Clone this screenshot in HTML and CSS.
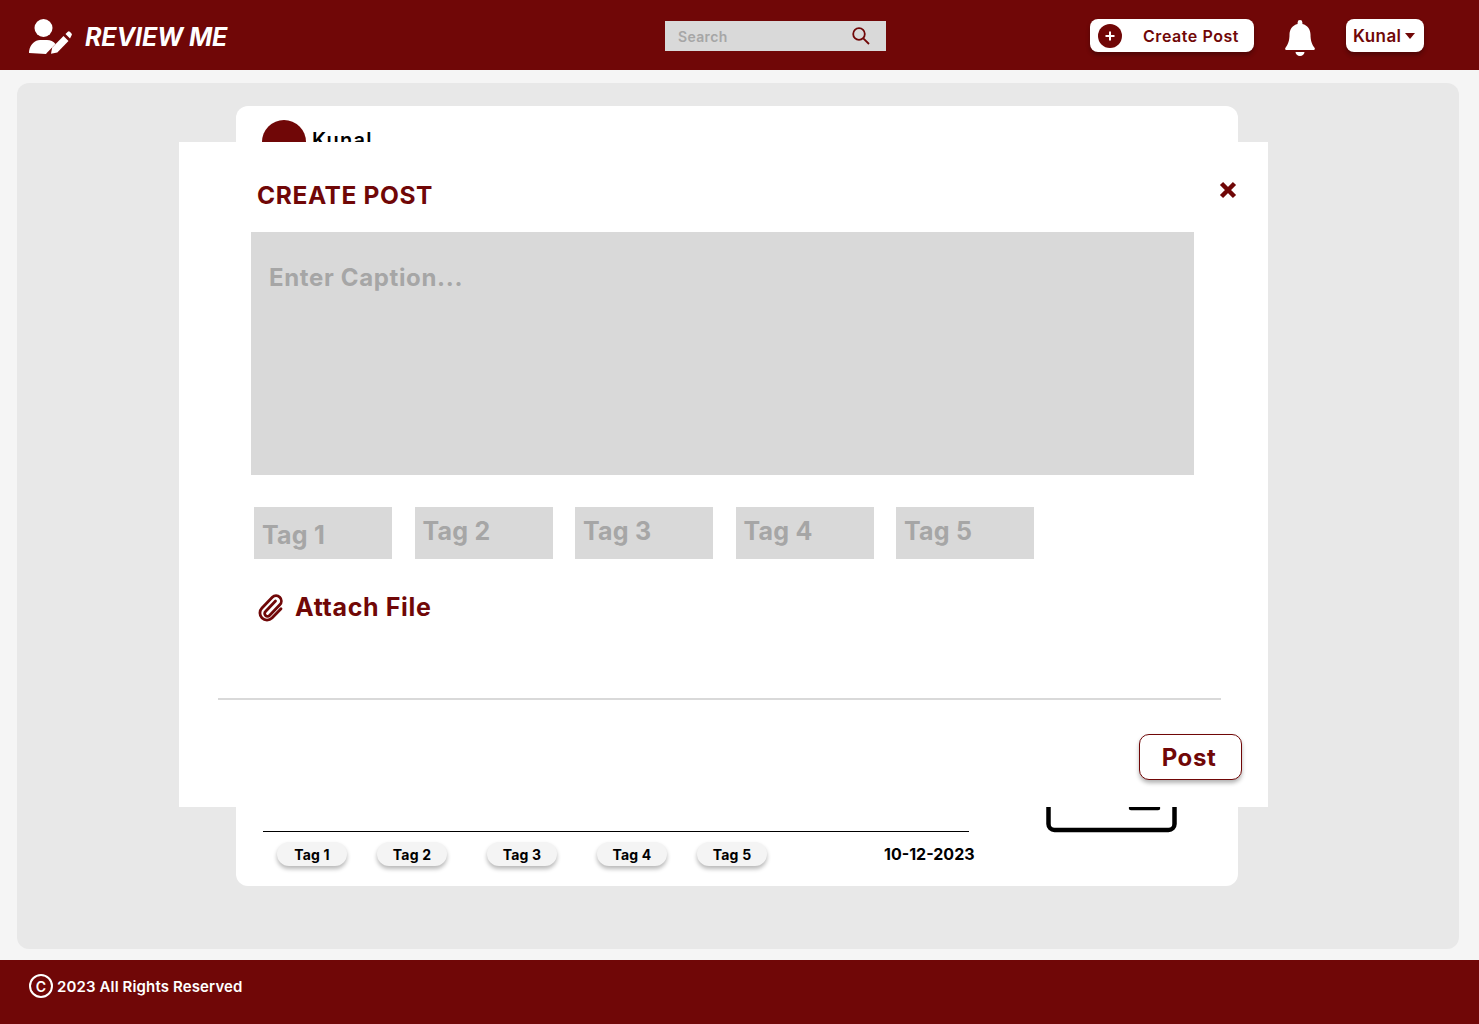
FILE: index.html
```html
<!DOCTYPE html>
<html lang="en">
<head>
<meta charset="utf-8">
<title>Review Me</title>
<link rel="stylesheet" href="styles.css">
</head>
<body>
<header class="topbar">
  <div class="brand">
    <svg class="brand-icon" viewBox="0 0 44 36" width="44" height="36"><circle cx="14.500" cy="9" r="9"/><path d="M0 34c0-.8 0-1.500.2-2.500C1.300 25.500 6 21 11 21h7c3.500 0 6.500 1.500 8.500 4l-9 9.200-.4 .8z"/><path d="M22 34.800l1.200-6.300L34.500 17l5 5L28.300 33.500z"/><path d="M36.500 15l2.300-2.300a1.500 1.500 0 0 1 2 0l1.700 1.700a1.500 1.500 0 0 1 0 2L41 19.500z"/></svg>
    <span class="brand-name">REVIEW ME</span>
  </div>
  <div class="search">
    <span class="search-text">Search</span>
    <svg viewBox="0 0 20 20" width="20" height="20" class="search-icon"><circle cx="8" cy="8" r="5.800"/><path d="M12.300 12.300L18 18"/></svg>
  </div>
  <div class="actions">
    <button class="create-btn">
      <span class="plus-circle"><svg viewBox="0 0 12 12" width="12" height="12"><path d="M6 1.500v9M1.500 6h9"/></svg></span>
      <span>Create Post</span>
    </button>
    <svg class="bell" viewBox="0 0 30 36" width="30" height="36"><path d="M15 0a2.400 2.400 0 0 0-2.400 2.400v1.500C7.500 5 4.500 9.300 4.500 14.500c0 6.500-1.500 10-4 13.200-.8 1-.2 2.300 1.200 2.300h26.600c1.400 0 2-1.300 1.200-2.300-2.500-3.200-4-6.700-4-13.200 0-5.200-3-9.500-8.100-10.600V2.400A2.400 2.400 0 0 0 15 0z"/><path d="M10.500 32h9c0 2.200-2 4-4.500 4s-4.500-1.800-4.500-4z"/></svg>
    <button class="user-btn"><span>Kunal</span><i class="caret"></i></button>
  </div>
</header>

<main class="page">
  <section class="panel">
    <article class="card">
      <div class="author">
        <span class="avatar"></span>
        <span class="author-name">Kunal</span>
      </div>
      <div class="card-body">
        <div class="card-rule"></div>
        <svg class="card-media" viewBox="0 0 131 30" width="131" height="30"><path d="M2.500 0v21a6 6 0 0 0 6 6h114a6 6 0 0 0 6-6V0"/><path d="M85 5h27"/></svg>
      </div>
      <div class="card-foot">
        <div class="chips">
          <span class="chip">Tag 1</span>
          <span class="chip">Tag 2</span>
          <span class="chip chip-wide">Tag 3</span>
          <span class="chip chip-wide">Tag 4</span>
          <span class="chip">Tag 5</span>
        </div>
        <span class="date">10-12-2023</span>
      </div>
    </article>

    <div class="modal">
      <div class="modal-head">
        <h2 class="modal-title">CREATE POST</h2>
        <svg class="close" viewBox="0 0 18 18" width="18" height="18"><path d="M2.500 2.500l13 13M15.500 2.500l-13 13"/></svg>
      </div>
      <div class="caption">Enter Caption...</div>
      <div class="tag-inputs">
        <div class="tag-input tag-low">Tag 1</div>
        <div class="tag-input">Tag 2</div>
        <div class="tag-input">Tag 3</div>
        <div class="tag-input">Tag 4</div>
        <div class="tag-input">Tag 5</div>
      </div>
      <div class="attach">
        <svg viewBox="0 0 26 30" width="26" height="30"><path d="M17.500 9L7.500 19.500a2.800 2.800 0 0 0 4 4L21.800 12.800a5.300 5.300 0 0 0-7.500-7.500L4 16a7 7 0 0 0 10 10l9-9.300"/></svg>
        <span>Attach File</span>
      </div>
      <hr class="divider">
      <div class="modal-foot"><button class="post-btn">Post</button></div>
    </div>
  </section>
</main>

<footer class="footer">
  <span class="copy-mark">C</span>
  <span class="copy-text">2023 All Rights Reserved</span>
</footer>
</body>
</html>
```

FILE: styles.css
```css
* { box-sizing: border-box; }
html, body { margin: 0; height: 100%; }
body {
  width: 1479px;
  height: 1024px;
  overflow: hidden;
  display: flex;
  flex-direction: column;
  background: #f5f5f5;
  font-family: "Inter", "Liberation Sans", sans-serif;
}
button { font-family: inherit; border: 0; cursor: pointer; }

.topbar {
  height: 70px;
  flex: none;
  display: flex;
  align-items: center;
  padding: 0 55px 0 29px;
  background: #700707;
}
.brand { width: 636px; display: flex; align-items: center; gap: 12px; padding-top: 4px; }
.brand-icon { fill: #fff; width: 44px; height: 36px; }
.brand-name { color: #fff; font-size: 25px; font-weight: 700; font-style: italic; letter-spacing: -.1px; }
.search {
  width: 221px;
  height: 30px;
  margin-top: 2px;
  display: flex;
  align-items: center;
  justify-content: space-between;
  padding: 0 15px 0 13px;
  background: #d9d9d9;
}
.search-text { color: #a6a6a6; font-size: 14px; font-weight: 600; letter-spacing: .35px; }
.search-icon { fill: none; stroke: #700707; stroke-width: 1.800; }
.actions { margin-left: auto; display: flex; align-items: center; gap: 31px; }
.create-btn {
  width: 164px;
  height: 33px;
  display: flex;
  align-items: center;
  gap: 21px;
  padding: 2px 0 0 8px;
  border-radius: 8px;
  background: #fff;
  color: #700707;
  font-size: 16px;
  font-weight: 600;
  letter-spacing: .55px;
  box-shadow: 0 3px 4px rgba(0,0,0,.3);
}
.plus-circle {
  width: 24px;
  height: 24px;
  border-radius: 50%;
  background: #700707;
  display: flex;
  align-items: center;
  justify-content: center;
}
.plus-circle svg { fill: none; stroke: #fff; stroke-width: 2; }
.bell { fill: #fff; margin-top: 5px; }
.user-btn {
  width: 78px;
  height: 33px;
  display: flex;
  align-items: center;
  gap: 4px;
  padding: 2px 0 0 7px;
  border-radius: 8px;
  background: #fff;
  color: #700707;
  font-size: 17px;
  font-weight: 600;
  letter-spacing: .4px;
  box-shadow: 0 3px 4px rgba(0,0,0,.3);
}
.caret {
  width: 0;
  height: 0;
  border-left: 5.500px solid transparent;
  border-right: 5.500px solid transparent;
  border-top: 6px solid #700707;
}

.page { height: 890px; flex: none; padding: 13px 20px 11px 17px; }
.panel {
  position: relative;
  height: 866px;
  padding: 23px 0 0 219px;
  border-radius: 12px;
  background: #e8e8e8;
}
.card {
  width: 1002px;
  height: 780px;
  display: flex;
  flex-direction: column;
  padding: 14px 0 0 26px;
  border-radius: 12px;
  background: #fff;
}
.author { display: flex; gap: 6px; }
.avatar { width: 44px; height: 44px; border-radius: 50%; background: #700707; }
.author-name { font-size: 20px; font-weight: 600; line-height: 40px; color: #000; letter-spacing: 1.200px; }
.card-body {
  margin-top: auto;
  display: flex;
  align-items: flex-end;
  justify-content: space-between;
  padding-right: 61px;
  padding-left: 1px;
}
.card-rule { width: 706px; height: 1px; background: #000; }
.card-media { fill: none; stroke: #000; stroke-width: 4.500; stroke-linecap: round; margin-bottom: -1px; }
.card-foot {
  height: 54px;
  display: flex;
  padding: 10px 0 0 15px;
}
.chips { display: flex; gap: 30px; }
.chip {
  width: 70px;
  height: 24px;
  display: flex;
  align-items: center;
  justify-content: center;
  border-radius: 12px;
  background: #f4f4f4;
  color: #000;
  font-size: 14px;
  font-weight: 700;
  letter-spacing: .2px;
  box-shadow: 0 3px 4px rgba(0,0,0,.28);
}
.chip-wide { margin-left: 10px; }
.date { margin: 0 0 0 117px; font-size: 16px; font-weight: 700; line-height: 24px; color: #000; }

.modal {
  position: absolute;
  left: 162px;
  top: 59px;
  width: 1089px;
  height: 665px;
  display: flex;
  flex-direction: column;
  padding: 0 26px 0 39px;
  background: #fff;
}
.modal-head {
  height: 90px;
  display: flex;
  align-items: flex-start;
  justify-content: space-between;
  padding: 36px 5px 0 39px;
}
.modal-title { margin: 0; font-size: 24.500px; line-height: 34px; font-weight: 700; color: #700707; letter-spacing: .6px; }
.close { fill: none; stroke: #700707; stroke-width: 4.500; margin-top: 3px; }
.caption {
  width: 943px;
  height: 243px;
  margin-left: 33px;
  padding: 29px 18px;
  background: #d9d9d9;
  color: #a6a6a6;
  font-size: 24px;
  line-height: 34px;
  font-weight: 700;
  letter-spacing: .65px;
}
.tag-inputs { display: flex; gap: 22.500px; margin: 32px 0 0 36px; }
.tag-input {
  width: 138px;
  height: 52px;
  padding: 8px 8px;
  background: #d9d9d9;
  color: #a6a6a6;
  font-size: 25px;
  line-height: 33px;
  font-weight: 700;
  letter-spacing: .2px;
}
.tag-low { padding-top: 12px; }
.attach {
  display: flex;
  align-items: center;
  gap: 11px;
  margin: 33px 0 0 40px;
  color: #700707;
  font-size: 25px;
  line-height: 30px;
  font-weight: 700;
  letter-spacing: .65px;
}
.attach svg { fill: none; stroke: #700707; stroke-width: 2.800; stroke-linecap: round; }
.divider { width: 1003px; height: 2px; margin: 76px 0 0 0; border: 0; background: #d9d9d9; }
.modal-foot { display: flex; justify-content: flex-end; margin-top: 34px; }
.post-btn {
  width: 103px;
  height: 46px;
  padding: 0 3px 0 0;
  border: 1px solid #700707;
  border-radius: 10px;
  background: #fff;
  color: #700707;
  font-size: 24px;
  font-weight: 700;
  letter-spacing: .6px;
  box-shadow: 0 3px 4px rgba(0,0,0,.3);
}

.footer {
  height: 64px;
  flex: none;
  display: flex;
  align-items: flex-start;
  gap: 4px;
  padding: 14px 0 0 29px;
  background: #700707;
  color: #fff;
}
.copy-mark {
  width: 24px;
  height: 24px;
  display: flex;
  align-items: center;
  justify-content: center;
  border: 2px solid #fff;
  border-radius: 50%;
  font-size: 14px;
  font-weight: 600;
}
.copy-text { font-size: 15px; line-height: 25px; font-weight: 600; letter-spacing: .13px; }
```
